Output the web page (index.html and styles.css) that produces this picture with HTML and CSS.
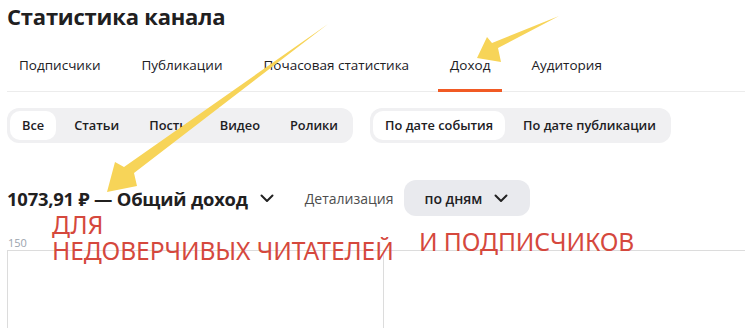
FILE: index.html
```html
<!DOCTYPE html>
<html lang="ru">
<head>
    <meta charset="UTF-8">
    <title>Статистика канала</title>
    <link rel="stylesheet" href="styles.css">
</head>
<body>
    <div class="page">
        <h1>Статистика канала</h1>

        <nav class="tabs">
            <span class="tab">Подписчики</span>
            <span class="tab">Публикации</span>
            <span class="tab">Почасовая статистика</span>
            <span class="tab active">Доход</span>
            <span class="tab">Аудитория</span>
        </nav>

        <div class="filters">
            <div class="segmented">
                <span class="seg selected">Все</span>
                <span class="seg">Статьи</span>
                <span class="seg">Посты</span>
                <span class="seg">Видео</span>
                <span class="seg">Ролики</span>
            </div>
            <div class="segmented">
                <span class="seg selected">По дате события</span>
                <span class="seg">По дате публикации</span>
            </div>
        </div>

        <div class="summary">
            <span class="total">1073,91 ₽ — Общий доход</span>
            <svg class="chev" width="14" height="9" viewBox="0 0 14 9"><path d="M1.5 1.5 L7 7 L12.5 1.5" fill="none" stroke="#222" stroke-width="2" stroke-linecap="round" stroke-linejoin="round"/></svg>
            <span class="detail-label">Детализация</span>
            <div class="dropdown">
                <span>по дням</span>
                <svg width="14" height="9" viewBox="0 0 14 9"><path d="M1.5 1.5 L7 7 L12.5 1.5" fill="none" stroke="#222" stroke-width="2" stroke-linecap="round" stroke-linejoin="round"/></svg>
            </div>
        </div>

        <div class="chart">
            <div class="axis-label">150</div>
            <div class="plot">
                <div class="col"></div>
                <div class="col"></div>
            </div>
        </div>
    </div>

    <div class="note note-left">ДЛЯ<br>НЕДОВЕРЧИВЫХ ЧИТАТЕЛЕЙ</div>
    <div class="note note-right">И ПОДПИСЧИКОВ</div>

    <svg class="arrows" width="745" height="328" viewBox="0 0 745 328">
        <polygon fill="#f7d458" points="328,24 134,173 137,186 107,192 115,162 124,167"/>
        <polygon fill="#f7d458" points="559,16 498,48 501,62 477,58 487,37 492,43"/>
    </svg>
</body>
</html>
```

FILE: styles.css
```css
body {
    margin: 0;
    background: #fff;
    color: #21201f;
    font-family: "Open Sans", "Noto Sans", sans-serif;
    width: 745px;
    height: 328px;
    overflow: hidden;
    position: relative;
}

.page {
    padding-left: 7px;
}

h1 {
    margin: 0;
    font-size: 22px;
    line-height: 32px;
    font-weight: 700;
    letter-spacing: -0.2px;
}

.tabs {
    display: flex;
    gap: 17px;
    margin-top: 14px;
    border-bottom: 1px solid #ececec;
}

.tab {
    padding: 9px 12px 14px;
    font-size: 13.5px;
    line-height: 20px;
    border-bottom: 3px solid transparent;
    margin-bottom: -1px;
}

.tab.active {
    border-bottom-color: #f15a24;
}

.filters {
    display: flex;
    gap: 17px;
    margin-top: 16px;
}

.segmented {
    display: flex;
    gap: 6px;
    padding: 3px;
    background: #f0f0f2;
    border-radius: 12px;
}

.seg {
    padding: 0 12px;
    height: 29px;
    line-height: 29px;
    font-size: 12.8px;
    font-weight: 600;
    border-radius: 10px;
}

.seg.selected {
    background: #fff;
}

.summary {
    display: flex;
    align-items: center;
    margin-top: 37px;
    height: 36px;
}

.total {
    font-size: 18.4px;
    font-weight: 700;
    letter-spacing: -0.2px;
}

.chev {
    margin-left: 12px;
}

.detail-label {
    margin-left: 31px;
    font-size: 14px;
    color: #4d4d4d;
}

.dropdown {
    display: flex;
    align-items: center;
    gap: 12px;
    margin-left: 11px;
    height: 36px;
    padding: 0 22px 0 20px;
    background: #e9eaee;
    border-radius: 12px;
    font-size: 14px;
    font-weight: 600;
}

.chart {
    margin-top: 20px;
}

.axis-label {
    font-size: 11px;
    line-height: 14px;
    color: #9aa3ad;
    padding-left: 1px;
}

.plot {
    display: flex;
    height: 80px;
    border-top: 1px solid #dcdcdc;
}

.col {
    flex-shrink: 0;
    width: 375px;
    border-left: 1px solid #dcdcdc;
}

.note {
    position: absolute;
    color: #d5483d;
    font-family: "Noto Sans", sans-serif;
    font-size: 24.6px;
    line-height: 26px;
    letter-spacing: -0.1px;
}

.note-left {
    left: 52px;
    top: 212px;
}

.note-right {
    left: 419px;
    top: 229px;
}

.arrows {
    position: absolute;
    left: 0;
    top: 0;
    pointer-events: none;
}
```
